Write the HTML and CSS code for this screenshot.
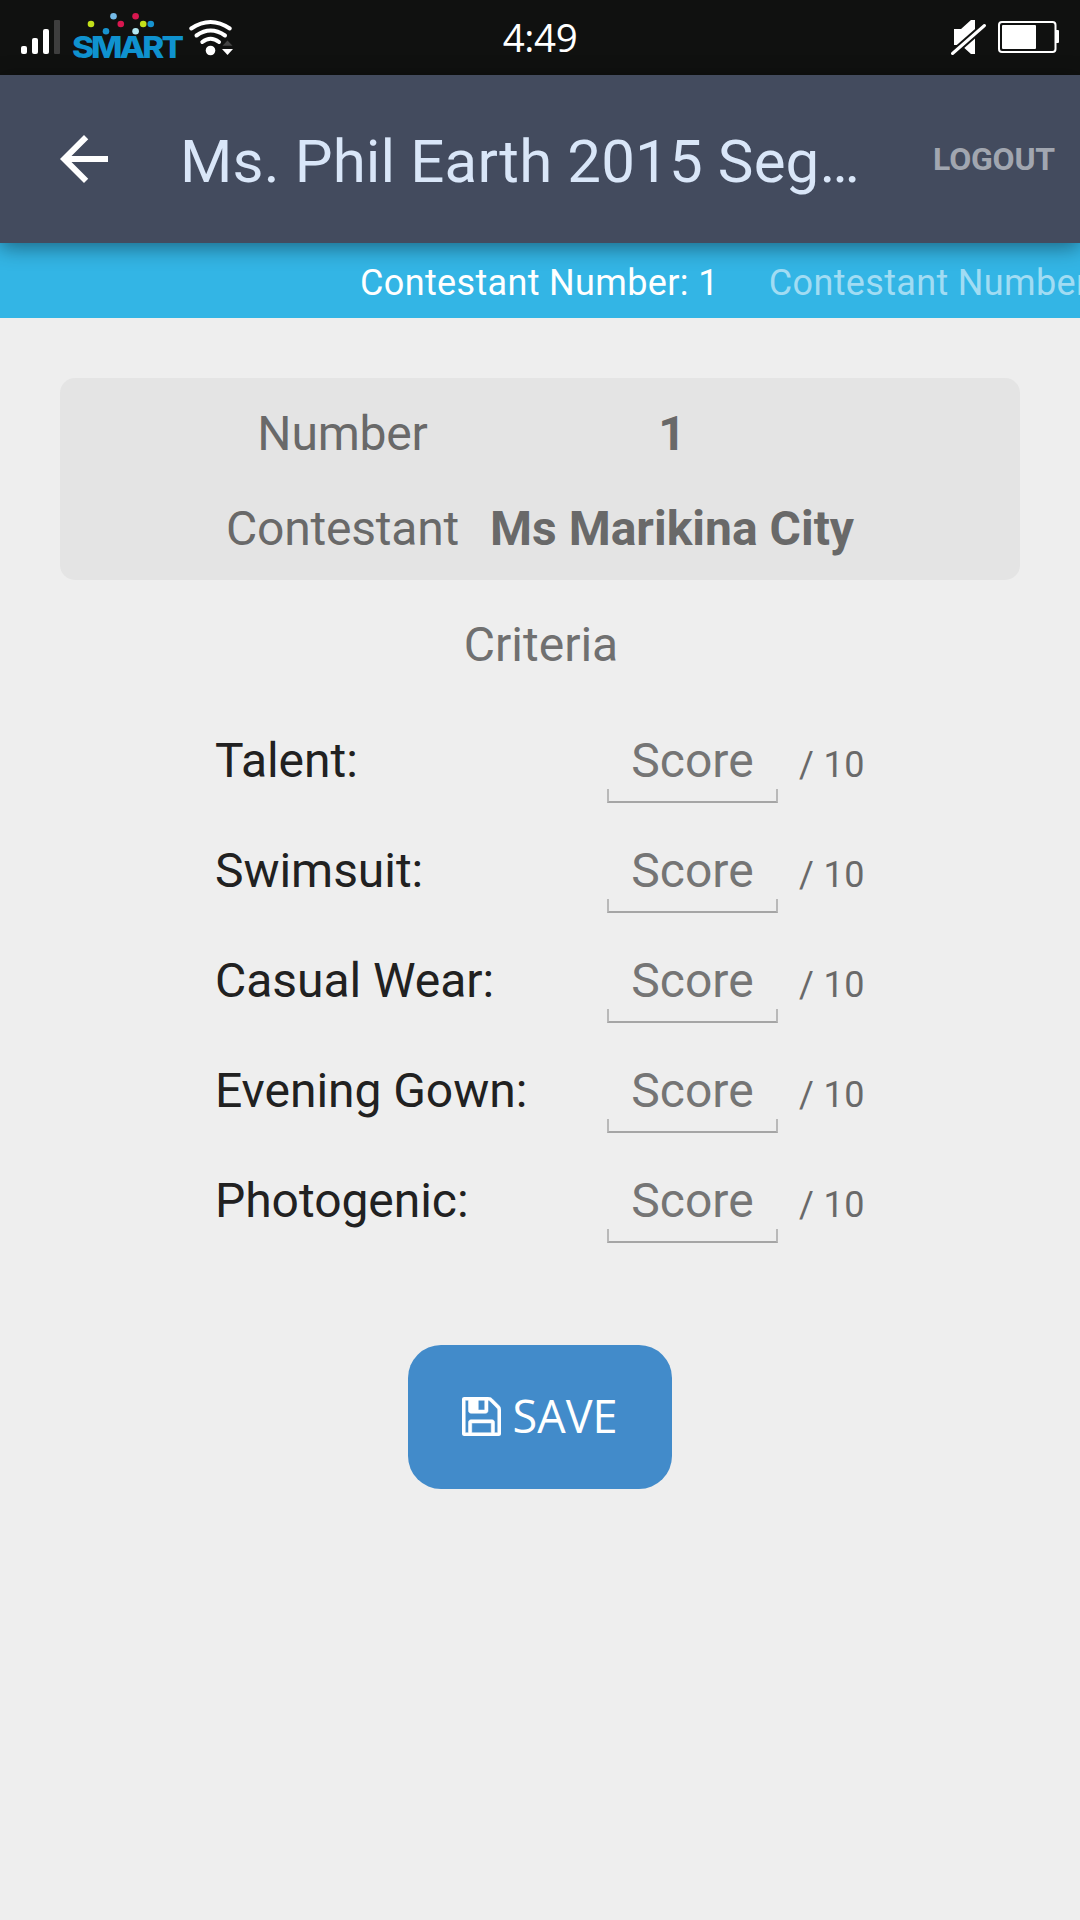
FILE: index.html
```html
<!DOCTYPE html>
<html lang="en">
<head>
<meta charset="utf-8">
<title>Ms. Phil Earth 2015</title>
<link rel="stylesheet" href="styles.css">
</head>
<body>
<div class="status-bar">
  <svg class="status-left" width="240" height="75" viewBox="0 0 240 75">
    <g fill="#fff">
      <rect x="21" y="46" width="6" height="8" rx="2"/>
      <rect x="32" y="38" width="6" height="16" rx="2"/>
      <rect x="43" y="29" width="6" height="25" rx="2"/>
    </g>
    <rect x="54" y="20" width="6" height="34" rx="1" fill="#3e3e3e"/>
    <g>
      <circle cx="91" cy="24" r="3.3" fill="#c3e01a"/>
      <circle cx="113.500" cy="16.200" r="3.300" fill="#75bbe8"/>
      <circle cx="120.800" cy="24" r="3.300" fill="#d8174f"/>
      <circle cx="135.600" cy="16.200" r="3.300" fill="#d8174f"/>
      <circle cx="143.200" cy="24" r="3.300" fill="#c3e01a"/>
      <circle cx="150.800" cy="24" r="3.300" fill="#1793cf"/>
      <circle cx="106" cy="31.200" r="3.300" fill="#1793cf"/>
      <circle cx="135.600" cy="31.200" r="3.300" fill="#b4e8f2"/>
    </g>
    <text class="carrier" transform="translate(72 57.800) scale(1.110 1)">SMART</text>
    <g fill="none" stroke="#fff" stroke-width="4" stroke-linecap="round">
      <path d="M191.200 28.500Q210.500 15.500 229.800 28.500"/>
      <path d="M196.500 35.500Q210.500 25.500 225 35.500"/>
      <path d="M202.300 42Q210.500 35.500 219 42"/>
    </g>
    <circle cx="210.500" cy="50.500" r="4.800" fill="#fff"/>
    <path d="M222.500 45.800l5-5.300 5 5.300z" fill="#444"/>
    <path d="M222 49h11l-5.500 6z" fill="#fff"/>
  </svg>
  <span class="clock">4:49</span>
  <svg class="status-right" width="130" height="75" viewBox="950 0 130 75">
    <path d="M954 29h7l10-9h4v34h-4l-10-9h-7z" fill="#fff"/>
    <path d="M952.500 53.500L984.500 25.500" stroke="#101110" stroke-width="7"/>
    <path d="M952.500 53.500L984.500 25.500" stroke="#fff" stroke-width="3" stroke-linecap="round"/>
    <rect x="999" y="22" width="56.500" height="30" rx="3" fill="none" stroke="#fff" stroke-width="2"/>
    <rect x="1002" y="25" width="34" height="24" rx="1" fill="#fff"/>
    <path d="M1056 30h2q1 0 1 1v11q0 1-1 1h-2z" fill="#fff"/>
  </svg>
</div>
<header class="app-bar">
  <svg class="back" width="48" height="48" viewBox="4 4 16 16"><path fill="#fff" d="M20 11H7.830l5.590-5.590L12 4l-8 8 8 8 1.410-1.410L7.830 13H20z"/></svg>
  <h1 class="title">Ms. Phil Earth 2015 Seg…</h1>
  <span class="logout">LOGOUT</span>
</header>
<nav class="pager">
  <span class="page current">Contestant Number: 1</span>
  <span class="page">Contestant Number: 2</span>
</nav>
<main>
  <section class="card">
    <span class="name">Number</span><span class="value">1</span>
    <span class="name">Contestant</span><span class="value">Ms Marikina City</span>
  </section>
  <h2 class="heading">Criteria</h2>
  <form class="criteria">
    <div class="row"><label>Talent:</label><div class="field"><input placeholder="Score"></div><span class="max">/ 10</span></div>
    <div class="row"><label>Swimsuit:</label><div class="field"><input placeholder="Score"></div><span class="max">/ 10</span></div>
    <div class="row"><label>Casual Wear:</label><div class="field"><input placeholder="Score"></div><span class="max">/ 10</span></div>
    <div class="row"><label>Evening Gown:</label><div class="field"><input placeholder="Score"></div><span class="max">/ 10</span></div>
    <div class="row"><label>Photogenic:</label><div class="field"><input placeholder="Score"></div><span class="max">/ 10</span></div>
  </form>
  <button class="save" type="button">
    <svg width="39" height="39" viewBox="0 0 1536 1536"><path fill="#fff" stroke="#fff" stroke-width="20" d="M384 1408h768v-384H384v384zm896 0h128V512q0-14-10-38.500t-20-34.500l-281-281q-10-10-34-20t-39-10v416q0 40-28 68t-68 28H352q-40 0-68-28t-28-68V128H128v1280h128V992q0-40 28-68t68-28h832q40 0 68 28t28 68v416zM896 480V160q0-13-9.500-22.500T864 128H672q-13 0-22.500 9.500T640 160v320q0 13 9.500 22.500T672 512h192q13 0 22.500-9.500T896 480zm640 32v928q0 40-28 68t-68 28H96q-40 0-68-28t-28-68V96q0-40 28-68T96 0h928q40 0 88 20t76 48l280 280q28 28 48 76t20 88z"/></svg>
    <span class="save-text">SAVE</span>
  </button>
</main>
</body>
</html>
```
FILE: styles.css
```css
* { box-sizing: border-box; }
body {
  margin: 0;
  width: 1080px;
  height: 1920px;
  overflow: hidden;
  background: #eee;
  font-family: Roboto, "Liberation Sans", sans-serif;
}
svg { display: block; flex: none; }
.status-bar {
  height: 75px;
  background: #101110;
  display: grid;
  grid-template-columns: 1fr auto 1fr;
}
.status-right { justify-self: end; }
.carrier {
  font: 800 30px Inter, sans-serif;
  letter-spacing: -2.6px;
  fill: #0f92cf;
}
.clock {
  font: 500 38.5px/75px "Open Sans", sans-serif;
  letter-spacing: -.4px;
  color: #fff;
}
.app-bar {
  position: relative;
  height: 168px;
  padding: 0 25px 0 60px;
  display: flex;
  align-items: center;
  background: #434b5e;
  box-shadow: 0 4px 20px rgba(0, 0, 0, .45);
}
.title {
  margin: 5px 0 0 72px;
  font-size: 60px;
  font-weight: 400;
  letter-spacing: .15px;
  color: #d9e6f8;
  white-space: nowrap;
}
.logout {
  margin-left: auto;
  font-size: 32px;
  font-weight: 700;
  letter-spacing: -.2px;
  color: #a1a6b0;
}
.pager {
  height: 75px;
  padding: 4px 0 0 360px;
  display: flex;
  align-items: center;
  gap: 50px;
  overflow: hidden;
  background: #33b5e5;
  font-size: 36px;
  letter-spacing: .35px;
  color: #a1dcf3;
  white-space: nowrap;
}
.current { color: #fff; }
main {
  display: flex;
  flex-direction: column;
  align-items: center;
  padding-top: 60px;
}
.card {
  width: 960px;
  height: 202px;
  padding: 8px 0 4px;
  border-radius: 15px;
  background: #e4e4e4;
  display: grid;
  grid-template-columns: auto auto;
  grid-auto-rows: 95px;
  justify-content: center;
  column-gap: 31px;
  font-size: 48px;
  line-height: 95px;
  color: #696969;
  text-align: center;
}
.name { letter-spacing: -.2px; }
.value { font-weight: 700; }
.heading {
  margin: 0;
  padding: 3px 0 0 2px;
  font-size: 48px;
  font-weight: 400;
  line-height: 123px;
  color: #707070;
}
.criteria {
  width: 650px;
  padding-top: 2px;
}
.row {
  height: 110px;
  display: grid;
  grid-template-columns: 392px 171px auto;
  align-items: center;
  font-size: 48px;
  line-height: 106px;
  color: #212121;
}
label {
  height: 110px;
  letter-spacing: -.05px;
}
.field {
  position: relative;
  height: 110px;
}
.field::after {
  content: "";
  position: absolute;
  left: 0;
  right: 0;
  top: 81px;
  height: 12px;
  border: 2px solid #a5a5a5;
  border-top: 0;
  border-left-color: #b9b9b9;
  border-right-color: #b9b9b9;
}
input {
  display: block;
  width: 171px;
  height: 106px;
  padding: 0;
  border: 0;
  background: none;
  font: inherit;
  text-align: center;
  color: #212121;
}
input::placeholder { color: #757575; opacity: 1; }
.max {
  padding: 4px 0 0 21px;
  font-size: 36px;
  letter-spacing: .4px;
  color: #696969;
  white-space: nowrap;
}
.save {
  margin-top: 87px;
  width: 264px;
  height: 144px;
  padding: 0 1px 1px 0;
  border: 0;
  border-radius: 33px;
  background: #428bca;
  color: #fff;
  display: flex;
  align-items: center;
  justify-content: center;
  gap: 12px;
  font: 45px/1 "Open Sans", sans-serif;
}
.save-text { padding-bottom: 2px; }
```
